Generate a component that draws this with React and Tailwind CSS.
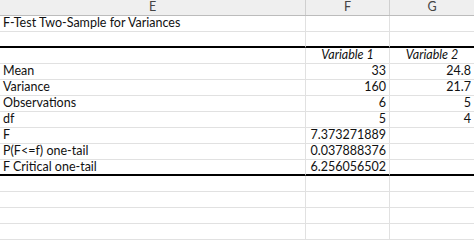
const rows = [
  { label: 'F-Test Two-Sample for Variances' },
  { label: '', thick: true },
  { label: '', f: 'Variable 1', g: 'Variable 2', head: true },
  { label: 'Mean', f: '33', g: '24.8' },
  { label: 'Variance', f: '160', g: '21.7' },
  { label: 'Observations', f: '6', g: '5' },
  { label: 'df', f: '5', g: '4' },
  { label: 'F', f: '7.373271889' },
  { label: 'P(F<=f) one-tail', f: '0.037888376' },
  { label: 'F Critical one-tail', f: '6.256056502', thick: true },
  { label: '' },
  { label: '' },
  { label: '' },
  { label: '' },
];

function Cell({ children, align = 'left', italic, last, thick }) {
  return (
    <div
      className={`h-[16px] flex items-center px-[3px] overflow-hidden whitespace-nowrap ${
        thick ? 'border-b-2 border-b-black' : 'border-b border-b-[#e1e1e1]'
      } ${last ? '' : 'border-r border-r-[#e1e1e1]'} ${
        align === 'right' ? 'justify-end' : align === 'center' ? 'justify-center' : 'justify-start'
      } ${italic ? 'italic' : ''}`}
    >
      {children}
    </div>
  );
}

export default function App() {
  return (
    <div className="w-[474px] h-[248px] overflow-hidden bg-white text-[12.5px] leading-none text-[#111] font-['Lato',sans-serif]">
      {/* Column headers */}
      <div className="grid grid-cols-[306px_84px_84px] h-[16px] bg-[#efefef] border-b border-b-[#bcbcbc] text-[#444]">
        <div className="flex items-center justify-center border-r border-r-[#cfcfcf]">E</div>
        <div className="flex items-center justify-center border-r border-r-[#cfcfcf]">F</div>
        <div className="flex items-center justify-center">G</div>
      </div>

      {rows.map((r, i) => (
        <div key={i} className="grid grid-cols-[306px_84px_84px]">
          <Cell thick={r.thick}>{r.label}</Cell>
          <Cell thick={r.thick} align={r.head ? 'center' : 'right'} italic={r.head}>
            {r.f}
          </Cell>
          <Cell thick={r.thick} align={r.head ? 'center' : 'right'} italic={r.head} last>
            {r.g}
          </Cell>
        </div>
      ))}
    </div>
  );
}
